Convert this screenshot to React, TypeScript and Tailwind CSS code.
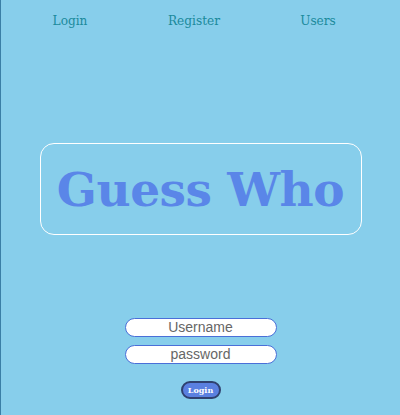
import React from 'react';

const serif = { fontFamily: 'Georgia, "DejaVu Serif", serif' };

export default function App() {
  return (
    <div className="w-[400px] h-[415px] bg-[#87ceeb] border-l border-[#3a7fa6] overflow-hidden" style={serif}>
      <nav className="flex pl-[7px] pt-[10px] h-[40px]" style={{ fontFamily: '"DejaVu Serif Condensed", "DejaVu Serif", serif' }}>
        {['Login', 'Register', 'Users'].map((l) => (
          <a key={l} className="w-[124px] text-center text-[13.5px] text-[#1b8a9c] leading-[20px] [font-stretch:condensed]">
            {l}
          </a>
        ))}
      </nav>
      <div className="mt-[103px] mx-auto w-[322px] h-[92px] border border-white rounded-[14px] flex items-center justify-center">
        <h1 className="text-[47px] font-bold text-[#5a86e8] tracking-[-0.5px] leading-none">Guess Who</h1>
      </div>
      <form className="mt-[83px] flex flex-col items-center">
        <input
          placeholder="Username"
          className="w-[152px] h-[19px] rounded-full border border-[#4a6fd8] bg-white text-center text-[14px] text-[#444] placeholder:text-[#666] outline-none"
          style={{ fontFamily: '"Liberation Sans", Arial, sans-serif' }}
        />
        <input
          placeholder="password"
          className="mt-[8px] w-[152px] h-[19px] rounded-full border border-[#4a6fd8] bg-white text-center text-[14px] text-[#444] placeholder:text-[#666] outline-none"
          style={{ fontFamily: '"Liberation Sans", Arial, sans-serif' }}
        />
        <button
          type="button"
          className="mt-[17px] w-[40px] h-[18px] rounded-full bg-[#5a80e0] border-2 border-[#2f416f] text-white text-[8px] font-bold leading-none"
        >
          Login
        </button>
      </form>
    </div>
  );
}
